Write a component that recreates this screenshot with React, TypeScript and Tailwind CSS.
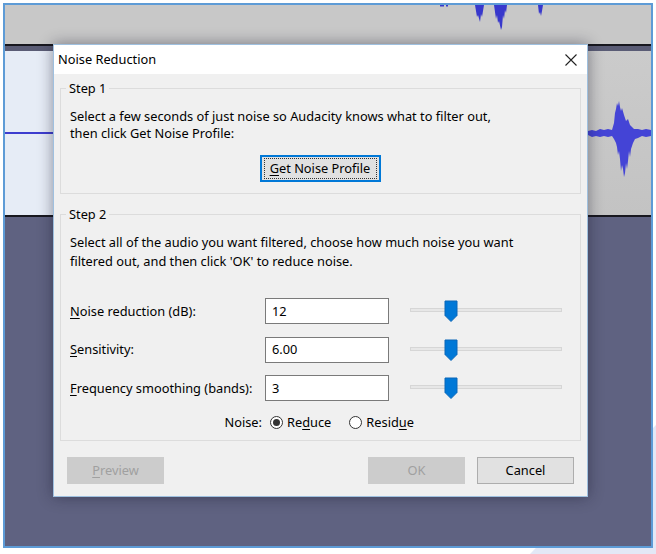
import React from "react";

const font = { fontFamily: '"Noto Sans", "Open Sans", Arial, sans-serif' };

function U({ children }: { children: React.ReactNode }) {
  return <span className="underline underline-offset-[2px] decoration-[1px]">{children}</span>;
}

function Slider() {
  return (
    <div className="relative ml-[21px] h-[26px] w-[152px]">
      <div className="absolute left-0 right-0 top-[10px] h-[4px] border border-[#d6d6d6] bg-[#e7e7e7]" />
      <svg className="absolute left-[34px] top-[2px]" width="14" height="22" viewBox="0 0 14 22">
        <path d="M1 1 H13 V15.5 L7 21.5 L1 15.5 Z" fill="#0078d7" stroke="#0a66b8" strokeWidth="1" />
      </svg>
    </div>
  );
}

function Row({ label, value }: { label: React.ReactNode; value: string }) {
  return (
    <div className="flex h-[26px] items-center">
      <div className="w-[195px]">{label}</div>
      <div className="flex h-[26px] w-[124px] items-center border border-[#7a7a7a] bg-white pl-[6px]">{value}</div>
      <Slider />
    </div>
  );
}

function Radio({ checked }: { checked?: boolean }) {
  return (
    <span className="flex h-[13px] w-[13px] items-center justify-center rounded-full border border-[#333333] bg-white">
      {checked && <span className="h-[7px] w-[7px] rounded-full bg-[#333333]" />}
    </span>
  );
}

export default function App() {
  return (
    <div className="relative h-[554px] w-[656px] overflow-hidden bg-white text-[12.8px] leading-[17px] text-black" style={font}>
      <svg className="absolute left-0 top-0" width="656" height="554">
        <polygon points="530,554 656,554 656,425" fill="#e3e8f6" />
      </svg>
      <div className="relative ml-[3px] mt-[3px] flex h-[545px] w-[650px] flex-col border-2 border-[#5d9bd6] bg-[#5f6281]">
        {/* top track */}
        <div className="relative h-[39px] bg-[#c8c8c8]">
          <svg className="absolute left-0 top-0" width="646" height="39">
            <g fill="#3838cc">
              <rect x="435" y="0" width="4" height="1.5" />
              <rect x="441" y="0" width="2" height="1.5" />
              <path d="M470 0 H479 L478 6 L477 12 L476 9 L475 17 L473 10 L472 12 Z" />
              <path d="M489 0 H502 L501 8 L500 5 L499 14 L498 10 L497 22 L496 25 L494 16 L493 18 L492 10 L491 14 Z" />
              <path d="M533 0 H538 L537 6 L536 11 L535 7 L534 9 Z" />
            </g>
          </svg>
        </div>
        <div className="h-[2px] bg-[#18181f]" />
        <div className="h-[5px] bg-[#5a5c75]" />
        {/* main track */}
        <div className="flex h-[164px]">
          <div className="relative w-[583px] bg-[#e6ecf6]">
            <svg className="absolute left-0 top-0" width="60" height="164">
              <rect x="0" y="81" width="60" height="2" fill="#3d3dcf" />
            </svg>
          </div>
          <div className="relative flex-1 bg-gradient-to-b from-[#cbcbcb] to-[#c3c3c3]">
            <svg className="absolute left-0 top-0" width="63" height="164">
              <path
                fill="#4444d6"
                d="M0 80 L4 79 L8 80 L12 78 L16 79 L20 78 L24 79 L26 72 L27 62 L28 58 L29 52 L30 55 L31 50 L32 56 L33 60 L34 57 L36 64 L38 70 L40 68 L42 74 L44 76 L46 78 L50 78 L54 79 L58 78 L63 79 L63 85 L58 86 L54 85 L50 87 L47 88 L45 92 L43 98 L42 106 L41 100 L40 110 L39 118 L38 112 L37 122 L36 126 L35 118 L34 114 L33 120 L32 108 L31 100 L30 104 L29 96 L28 92 L27 90 L26 88 L24 85 L20 86 L16 85 L12 86 L8 85 L4 86 L0 84 Z"
              />
            </svg>
          </div>
        </div>
        <div className="h-[2px] bg-[#18181f]" />
        <div className="flex-1 bg-[#5f6281]" />
      </div>

      {/* dialog */}
      <div className="absolute left-[53px] top-[44px] flex h-[453px] w-[535px] flex-col border border-[#9fc0df] bg-[#f0f0f0] shadow-[0_0_14px_rgba(20,20,40,0.45)]">
        <div className="flex h-[29px] items-center justify-between bg-white pl-[4px] pr-[10px] text-[12.8px]">
          <span>Noise Reduction</span>
          <svg width="12" height="12" viewBox="0 0 12 12">
            <path d="M0.5 0.5 L11.5 11.5 M11.5 0.5 L0.5 11.5" stroke="#222" strokeWidth="1.1" />
          </svg>
        </div>
        <div className="flex flex-1 flex-col px-[6px]">
          <fieldset className="mt-[6px] border border-[#dcdcdc] pb-[11px] pl-[9px] pr-[9px]">
            <legend className="-ml-[4px] px-[3px]">Step 1</legend>
            <div className="pt-[11px]">
              <div>Select a few seconds of just noise so Audacity knows what to filter out,</div>
              <div>then click Get Noise Profile:</div>
            </div>
            <div className="mt-[13px] flex justify-center pr-[1px]">
              <div className="flex h-[27px] w-[121px] items-center justify-center border-2 border-[#0078d7] bg-[#e1e1e1]">
                <div className="flex h-[21px] w-[113px] items-center justify-center border border-dotted border-[#333]">
                  <span>
                    <U>G</U>et Noise Profile
                  </span>
                </div>
              </div>
            </div>
          </fieldset>

          <fieldset className="mt-[12px] border border-[#dcdcdc] pb-[9px] pl-[9px] pr-[9px]">
            <legend className="-ml-[4px] px-[3px]">Step 2</legend>
            <div className="pt-[10px] leading-[19px]">
              <div>Select all of the audio you want filtered, choose how much noise you want</div>
              <div>filtered out, and then click 'OK' to reduce noise.</div>
            </div>
            <div className="mt-[27px] flex flex-col gap-[12.5px]">
              <Row label={<span><U>N</U>oise reduction (dB):</span>} value="12" />
              <Row label={<span><U>S</U>ensitivity:</span>} value="6.00" />
              <Row label={<span><U>F</U>requency smoothing (bands):</span>} value="3" />
            </div>
            <div className="mt-[13px] flex h-[17px] items-center">
              <div className="w-[192px] text-right">Noise:</div>
              <div className="ml-[8px] flex items-center">
                <Radio checked />
                <span className="ml-[4px]">
                  Re<U>d</U>uce
                </span>
                <span className="ml-[18px]">
                  <Radio />
                </span>
                <span className="ml-[4px]">
                  Resid<U>u</U>e
                </span>
              </div>
            </div>
          </fieldset>

          <div className="mt-[16px] flex px-[7px]">
            <div className="flex h-[27px] w-[97px] items-center justify-center border border-[#cccccc] bg-[#cccccc] text-[#a0a0a0]">
              <span>
                <U>P</U>review
              </span>
            </div>
            <div className="flex-1" />
            <div className="flex h-[27px] w-[97px] items-center justify-center border border-[#cccccc] bg-[#cccccc] text-[#a0a0a0]">
              OK
            </div>
            <div className="ml-[12px] flex h-[27px] w-[97px] items-center justify-center border border-[#adadad] bg-[#e1e1e1]">
              Cancel
            </div>
          </div>
        </div>
      </div>
    </div>
  );
}
